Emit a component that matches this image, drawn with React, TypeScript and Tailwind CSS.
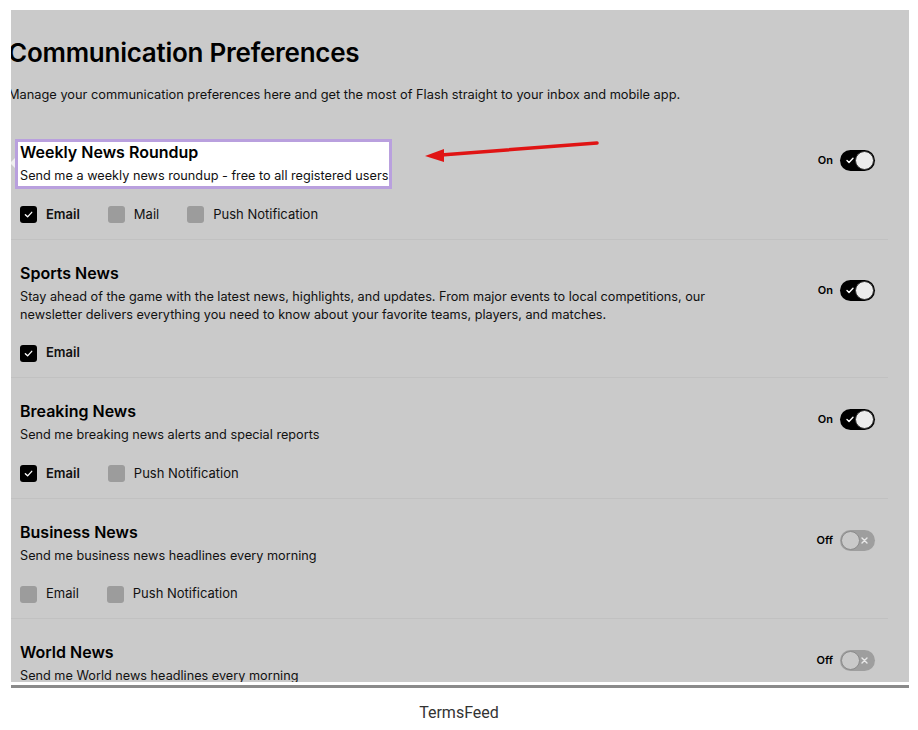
import React from 'react';

type Channel = { label: string; checked: boolean };
type Section = { title: string; desc: React.ReactNode; channels: Channel[]; on: boolean; highlight?: boolean };

const sections: Section[] = [
    {
        title: 'Weekly News Roundup',
        desc: 'Send me a weekly news roundup - free to all registered users',
        channels: [
            { label: 'Email', checked: true },
            { label: 'Mail', checked: false },
            { label: 'Push Notification', checked: false },
        ],
        on: true,
        highlight: true,
    },
    {
        title: 'Sports News',
        desc: (
            <>
                Stay ahead of the game with the latest news, highlights, and updates. From major events to local competitions, our
                <br />
                newsletter delivers everything you need to know about your favorite teams, players, and matches.
            </>
        ),
        channels: [{ label: 'Email', checked: true }],
        on: true,
    },
    {
        title: 'Breaking News',
        desc: 'Send me breaking news alerts and special reports',
        channels: [
            { label: 'Email', checked: true },
            { label: 'Push Notification', checked: false },
        ],
        on: true,
    },
    {
        title: 'Business News',
        desc: 'Send me business news headlines every morning',
        channels: [
            { label: 'Email', checked: false },
            { label: 'Push Notification', checked: false },
        ],
        on: false,
    },
    {
        title: 'World News',
        desc: 'Send me World news headlines every morning',
        channels: [
            { label: 'Email', checked: false },
            { label: 'Push Notification', checked: false },
        ],
        on: false,
    },
];

function Checkbox({ checked }: { checked: boolean }) {
    return (
        <div className={`w-[17px] h-[17px] rounded-[3px] flex items-center justify-center ${checked ? 'bg-black' : 'bg-[#9c9c9c]'}`}>
            {checked && (
                <svg width="9" height="9" viewBox="0 0 10 10" fill="none">
                    <path d="M1.5 5.2 L4 7.6 L8.6 2.6" stroke="white" strokeWidth="1.5" strokeLinecap="round" strokeLinejoin="round" />
                </svg>
            )}
        </div>
    );
}

function Toggle({ on }: { on: boolean }) {
    return (
        <div className="flex items-center gap-[7px] mb-[6px]">
            <span className="text-[11px] font-semibold text-black">{on ? 'On' : 'Off'}</span>
            {on ? (
                <div className="relative w-[35px] h-[21px] rounded-full bg-black">
                    <svg className="absolute left-[6px] top-[7px]" width="8" height="7" viewBox="0 0 8 7" fill="none">
                        <path d="M1 3.6 L3 5.5 L7 1.3" stroke="white" strokeWidth="1.4" strokeLinecap="round" strokeLinejoin="round" />
                    </svg>
                    <div className="absolute right-[1px] top-[1px] w-[19px] h-[19px] rounded-full bg-[#ececec] border border-[#333]" />
                </div>
            ) : (
                <div className="relative w-[35px] h-[21px] rounded-full bg-[#9e9e9e]">
                    <svg className="absolute right-[7px] top-[7px]" width="7" height="7" viewBox="0 0 7 7" fill="none">
                        <path d="M1 1 L6 6 M6 1 L1 6" stroke="#e8e8e8" strokeWidth="1.4" strokeLinecap="round" />
                    </svg>
                    <div className="absolute left-[1px] top-[1px] w-[19px] h-[19px] rounded-full bg-[#c9c9c9] border border-[#8a8a8a]" />
                </div>
            )}
        </div>
    );
}

function PreferenceRow({ s }: { s: Section }) {
    const text = (
        <div>
            <h3 className="text-[16px] leading-[20px] font-semibold text-black">{s.title}</h3>
            <p className="mt-[5px] text-[12.7px] leading-[18px] text-[#111]">{s.desc}</p>
        </div>
    );

    return (
        <div className="pl-[9px] pr-[13px] pt-[23px] pb-[14px] border-b border-[#c1c1c1]">
            <div className="flex items-center justify-between">
                {s.highlight ? (
                    <div className="relative w-fit -ml-[5px] -mt-[3px] -mb-[4px] pl-[2px] pr-[1px] pb-[1px] bg-white border-[3px] border-[#b9a0de]">
                        <div className="absolute -left-[8px] top-[16px] w-0 h-0 border-y-[5px] border-y-transparent border-r-[5px] border-r-[#efefef]" />
                        {text}
                    </div>
                ) : (
                    text
                )}
                <Toggle on={s.on} />
            </div>
            <div className="mt-[19.5px] h-[20px] flex items-center gap-[28px]">
                {s.channels.map((c) => (
                    <div key={c.label} className="flex items-center gap-[9px]">
                        <Checkbox checked={c.checked} />
                        <span className={`text-[13px] text-[#111] ${c.checked ? 'font-semibold' : 'font-normal'}`}>{c.label}</span>
                    </div>
                ))}
            </div>
        </div>
    );
}

export default function App() {
    return (
        <div className="w-[918px] h-[730px] bg-white font-['Inter',sans-serif] pt-[10px]">
            <div className="relative ml-[11px] w-[898px] h-[672px] bg-[#cacaca] overflow-hidden">
                {/* Header */}
                <div className="-ml-[3px] pt-[27px]">
                    <h1 className="text-[26px] leading-[32px] font-semibold text-black tracking-[-0.25px]">Communication Preferences</h1>
                    <p className="mt-[17px] text-[12.8px] leading-[18px] text-[#111]">
                        Manage your communication preferences here and get the most of Flash straight to your inbox and mobile app.
                    </p>
                </div>

                {/* Preferences list */}
                <div className="mt-[15px] w-[877px]">
                    {sections.map((s) => (
                        <PreferenceRow key={s.title} s={s} />
                    ))}
                </div>

                {/* Annotation arrow */}
                <svg className="absolute left-[400px] top-[120px]" width="200" height="40" viewBox="0 0 200 40" fill="none">
                    <path d="M186 13 L30 25" stroke="#e01414" strokeWidth="3.5" strokeLinecap="round" />
                    <path d="M14 26 L33 19 L33 32 Z" fill="#e01414" />
                </svg>
            </div>
            <div className="mt-[3px] ml-[11px] w-[898px] h-[3px] bg-[#8a8a8a]" />
            <div className="mt-[15px] text-center text-[16px] leading-[20px] text-[#333] font-['Roboto',sans-serif]">TermsFeed</div>
        </div>
    );
}
